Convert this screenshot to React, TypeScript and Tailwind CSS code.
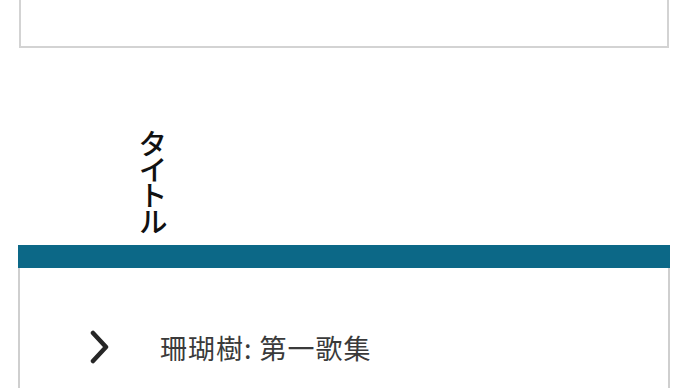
import React from 'react';

export default function App() {
  return (
    <div className="w-[690px] h-[388px] overflow-hidden bg-white font-['Noto_Sans_CJK_JP','Noto_Sans',sans-serif]">
      {/* 上のボックス（上端は画面外） */}
      <div className="ml-[19px] w-[650px] h-[48px] border-x-2 border-b-2 border-[#d3d3d3] bg-white" />

      {/* タイトル（縦書き） */}
      <div className="h-[197px] pl-[138px] pt-[81px]">
        <h2 className="[writing-mode:vertical-rl] text-[29px] leading-none font-medium text-[#111] tracking-[-3px]">
          タイトル
        </h2>
      </div>

      {/* リストカード */}
      <div className="ml-[18px] w-[652px]">
        <div className="h-[23px] bg-[#0c6887]" />
        <div className="h-[200px] border-x-2 border-[#cfcfcf] bg-white pt-[62px]">
          <div className="flex items-center pl-[70px]">
            <svg width="20" height="34" viewBox="0 0 20 34" className="shrink-0">
              <polyline
                points="3,3 16,17 3,31"
                fill="none"
                stroke="#262626"
                strokeWidth="4.5"
                strokeLinecap="round"
                strokeLinejoin="round"
              />
            </svg>
            <span className="ml-[50px] text-[27px] leading-none text-[#3a3a3a] tracking-[1px]">
              珊瑚樹: 第一歌集
            </span>
          </div>
        </div>
      </div>
    </div>
  );
}
